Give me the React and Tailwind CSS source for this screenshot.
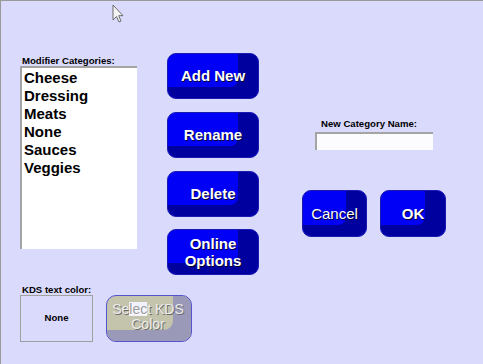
import React from "react";

const font = { fontFamily: '"Liberation Sans", Arial, sans-serif' };

function BlueButton({ children, className = "", textClass = "font-bold" }) {
  return (
    <div
      className={`flex items-center justify-center rounded-[9px] border border-[#1a1ab0] bg-[#0000f6] shadow-[inset_-20px_-11px_0_#00009e] text-white text-[15px] leading-[17px] text-center [text-shadow:1px_1px_0_#000030] ${textClass} ${className}`}
    >
      <div className="pb-[1px]">{children}</div>
    </div>
  );
}

function Cursor() {
  return (
    <svg
      className="absolute left-[111px] top-[3px]"
      width="13"
      height="19"
      viewBox="0 0 13 19"
    >
      <path
        d="M1 1 L1 16 L4.5 12.5 L7 18 L9 17 L6.7 11.7 L11 11.7 Z"
        fill="#f4f4f4"
        stroke="#6a6a6a"
        strokeWidth="1"
        strokeLinejoin="miter"
      />
    </svg>
  );
}

export default function App() {
  const items = ["Cheese", "Dressing", "Meats", "None", "Sauces", "Veggies"];
  return (
    <div
      className="relative w-[483px] h-[364px] bg-[#dadafd] border-t border-l border-[#9a9a9a] overflow-hidden text-black"
      style={font}
    >
      <Cursor />
      <div className="flex flex-col pt-[52px] pl-[19px]">
        {/* top row */}
        <div className="flex items-start">
          {/* list column */}
          <div className="flex flex-col w-[117px] pt-[3px]">
            <div className="text-[9.6px] font-bold leading-[10px] pl-[2px]">
              Modifier Categories:
            </div>
            <div className="h-[183px] bg-white border-t-2 border-l-2 border-t-[#a4a4a4] border-l-[#a4a4a4] pl-[2px] pt-[1px]">
              {items.map((it) => (
                <div key={it} className="text-[15px] font-bold leading-[18px]">
                  {it}
                </div>
              ))}
            </div>
          </div>

          {/* buttons column */}
          <div className="ml-[30px] flex flex-col gap-[13px]">
            <BlueButton className="w-[92px] h-[46px]">Add New</BlueButton>
            <BlueButton className="w-[92px] h-[46px]">Rename</BlueButton>
            <BlueButton className="w-[92px] h-[46px]">Delete</BlueButton>
            <BlueButton className="w-[92px] h-[46px] -mt-[1px]">
              Online
              <br />
              Options
            </BlueButton>
          </div>

          {/* right column */}
          <div className="ml-[43px] flex flex-col w-[144px]">
            <div className="mt-[65px] text-[9.6px] font-bold leading-[12px] pl-[19px]">
              New Category Name:
            </div>
            <div className="ml-[13px] mt-[2px] w-[118px] h-[18px] bg-[#fcfcff] border-t-2 border-l-2 border-t-[#a4a4a4] border-l-[#a4a4a4]" />
            <div className="mt-[40px] flex gap-[13px]">
              <BlueButton className="w-[65px] h-[47px]" textClass="font-normal">
                Cancel
              </BlueButton>
              <BlueButton className="w-[66px] h-[47px]">OK</BlueButton>
            </div>
          </div>
        </div>

        {/* bottom row */}
        <div className="mt-[10px] flex flex-col">
          <div className="text-[9.6px] font-bold leading-[10px] pl-[2px]">
            KDS text color:
          </div>
          <div className="flex items-start">
            <div className="w-[73px] h-[47px] border-[1.5px] border-[#a0a0a0] flex items-center justify-center text-[9.6px] font-bold">
              None
            </div>
            <div className="ml-[13px] w-[86px] h-[47px] rounded-[10px] border-[1.5px] border-[#5454cc] bg-[#c4c4ac] shadow-[inset_-18px_-11px_0_#9a9ab8] flex items-center justify-center text-center text-[14px] leading-[15px] text-[#ececec] [text-shadow:1px_1px_0_#6a6a6a]">
              <div className="pb-[3px] pr-[2px] whitespace-nowrap">
                <div className="h-[15px]">
                  Se<span className="inline-block h-[14px] leading-[14px] bg-[#f2f2ff] text-[#9a9a9a] [text-shadow:1px_1px_0_#ffffff]">lec</span>t KDS
                </div>
                <div className="h-[15px]">Color</div>
              </div>
            </div>
          </div>
        </div>
      </div>
    </div>
  );
}
